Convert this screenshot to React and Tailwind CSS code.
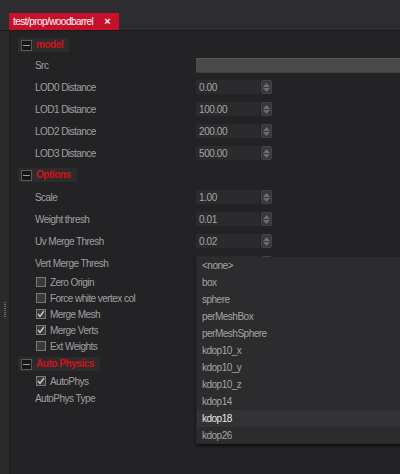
import React from 'react'

const font = { fontFamily: '"Liberation Sans", Arial, sans-serif' }

function Collapse() {
  return (
    <span className="w-[11px] h-[11px] border border-[#5a5a5a] bg-[#161616] flex items-center justify-center shrink-0">
      <span className="w-[7px] h-[1px] bg-[#9a9a9a]" />
    </span>
  )
}

function Header({ title }) {
  return (
    <div className="flex w-fit items-center gap-[4px] h-[14px] pl-[3px] pr-[6px] bg-[#2c2c2c] whitespace-nowrap">
      <Collapse />
      <span className="text-[#d4101c] font-bold text-[10px] tracking-[-0.45px] leading-none">{title}</span>
    </div>
  )
}

function Spin() {
  return (
    <div className="w-[11px] h-[14px] bg-[#38383a] border border-[#444446] rounded-[2px] flex flex-col items-center justify-center gap-[1px]">
      <svg width="7" height="4" viewBox="0 0 7 4"><path d="M0 4 L3.5 0 L7 4 Z" fill="#6e6e70" /></svg>
      <svg width="7" height="4" viewBox="0 0 7 4"><path d="M0 0 L3.5 4 L7 0 Z" fill="#6e6e70" /></svg>
    </div>
  )
}

function NumRow({ label, value }) {
  return (
    <div className="flex items-center h-[22px]">
      <span className="w-[161px] text-[#a0a0a0] text-[10px] tracking-[-0.55px]">{label}</span>
      <div className="flex items-center gap-[1px]">
        <div className="w-[64px] h-[14px] bg-[#2b2b2d] flex items-center pl-[3px] text-[#a6a6a6] text-[10px] tracking-[-0.4px]">{value}</div>
        <Spin />
      </div>
    </div>
  )
}

function Check({ label, checked }) {
  return (
    <div className="flex items-center h-[16px] pl-[1px] gap-[4px]">
      <span className="w-[10px] h-[10px] border border-[#7a7a7a] bg-[#3a3a3c] flex items-center justify-center">
        {checked && (
          <svg width="8" height="8" viewBox="0 0 8 8"><path d="M1 4 L3 6.5 L7 1" stroke="#d0d0d0" strokeWidth="1.3" fill="none" /></svg>
        )}
      </span>
      <span className="text-[#a0a0a0] text-[10px] tracking-[-0.55px]">{label}</span>
    </div>
  )
}

const items = ['<none>', 'box', 'sphere', 'perMeshBox', 'perMeshSphere', 'kdop10_x', 'kdop10_y', 'kdop10_z', 'kdop14', 'kdop18', 'kdop26']

export default function App() {
  return (
    <div className="relative w-[400px] h-[474px] overflow-hidden bg-[#232325] flex flex-col" style={font}>
      {/* tab bar */}
      <div className="h-[31px] bg-[#2d2d2f] border-b border-[#1a1a1b] flex items-end pl-[9px] shrink-0">
        <div className="h-[17px] w-[110px] bg-[#c8102a] flex items-center pl-[4px] text-white text-[10px] tracking-[-0.55px] whitespace-nowrap">
          <span>test/prop/woodbarrel</span>
          <span className="ml-[11px] font-bold text-[11px] leading-none">×</span>
        </div>
      </div>

      <div className="flex flex-1">
        {/* side strip */}
        <div className="w-[10px] bg-[#2b2b2d] border-r border-[#1b1b1c] flex flex-col items-center pt-[271px]">
          <svg width="2" height="16" viewBox="0 0 2 16">
            {[0, 2, 4, 6, 8, 10, 12, 14].map(y => (
              <rect key={y} x="0" y={y} width="2" height="1" fill="#6a6a6c" />
            ))}
          </svg>
        </div>

        {/* properties */}
        <div className="flex-1 pt-[7px] pl-[8px]">
          <Header title="model" />
          <div className="pl-[17px] mt-[2px]">
            <div className="flex items-center h-[22px]">
              <span className="w-[161px] text-[#a0a0a0] text-[10px] tracking-[-0.55px]">Src</span>
              <div className="flex-1 h-[15px] bg-[#4a4a4b] border-t border-[#555556] border-b border-b-[#3c3c3d]" />
            </div>
            <NumRow label="LOD0 Distance" value="0.00" />
            <NumRow label="LOD1 Distance" value="100.00" />
            <NumRow label="LOD2 Distance" value="200.00" />
            <NumRow label="LOD3 Distance" value="500.00" />
          </div>

          <div className="mt-[4px]">
            <Header title="Options" />
          </div>
          <div className="pl-[17px] mt-[4px]">
            <NumRow label="Scale" value="1.00" />
            <NumRow label="Weight thresh" value="0.01" />
            <NumRow label="Uv Merge Thresh" value="0.02" />
            <NumRow label="Vert Merge Thresh" value="" />
            <Check label="Zero Origin" />
            <Check label="Force white vertex col" />
            <Check label="Merge Mesh" checked />
            <Check label="Merge Verts" checked />
            <Check label="Ext Weights" />
          </div>

          <div className="mt-[3px]">
            <Header title="Auto Physics" />
          </div>
          <div className="pl-[17px] mt-[2px]">
            <Check label="AutoPhys" checked />
            <div className="flex items-center h-[18px] text-[#a0a0a0] text-[10px] tracking-[-0.55px]">AutoPhys Type</div>
          </div>
        </div>
      </div>

      {/* open dropdown list */}
      <div className="absolute top-[257px] left-[196px] w-[210px] bg-[#2c2c2e] shadow-[0_2px_3px_rgba(0,0,0,0.6)] border-l border-[#29292b]">
        {items.map(it => (
          <div
            key={it}
            className={`h-[17px] flex items-center pl-[5px] text-[10px] tracking-[-0.5px] ${it === 'kdop18' ? 'bg-[#333335] text-[#e6e6e6]' : 'text-[#a4a4a4]'}`}
          >
            {it}
          </div>
        ))}
      </div>
    </div>
  )
}
